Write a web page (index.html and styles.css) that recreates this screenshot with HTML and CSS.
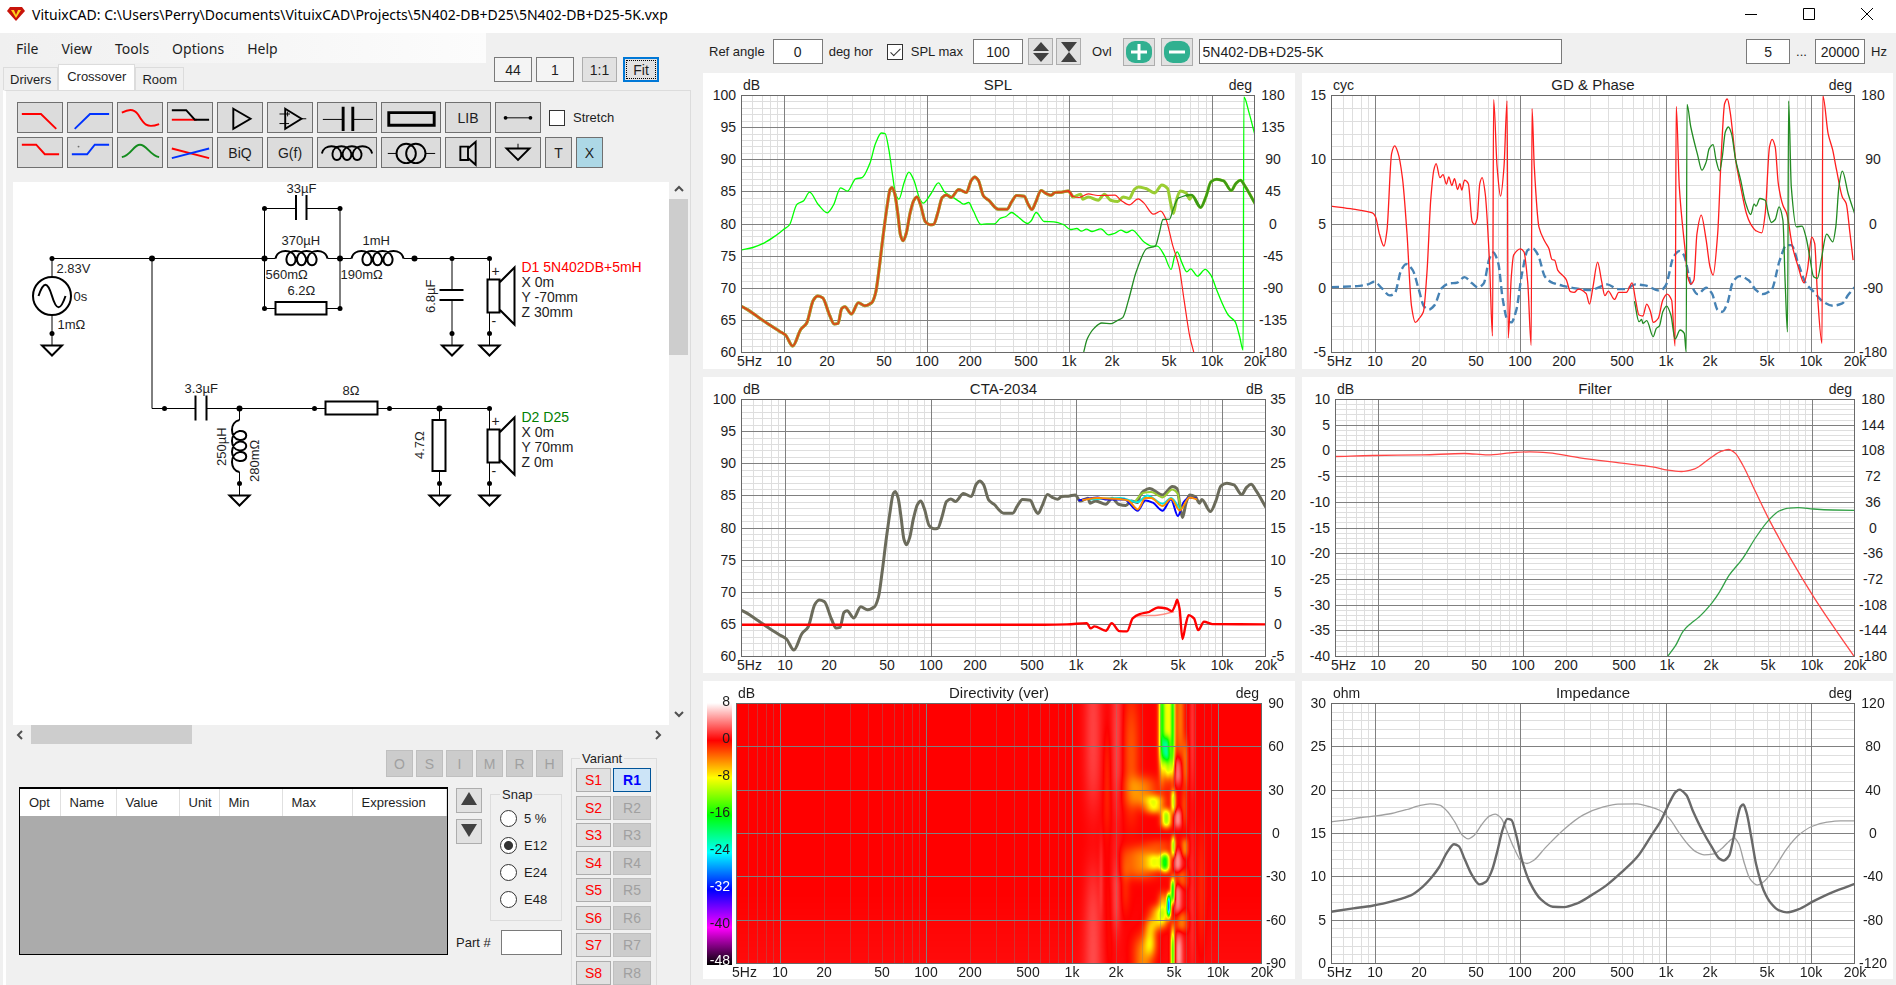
FILE: index.html
```html
<!DOCTYPE html>
<html lang="en">

<head>
  <meta charset="UTF-8">
  <title>VituixCAD</title>
  <link rel="stylesheet" href="styles.css">
</head>

<body>
  <svg class="symbols" aria-hidden="true">
    <symbol id="coil" viewBox="0 0 52 20" overflow="visible">
      <path d="M0 10 C2 0 18 0 20 10 C21 19 10 19 11 10 C12 0 28 0 30.5 10 C31 19 21 19 21.5 10 C23 0 39 0 41 10 C42 19 31 19 32 10 C34 0 50 0 52 10" />
    </symbol>
    <symbol id="ground" viewBox="0 0 24 24" overflow="visible">
      <path class="wire" d="M12 0 V12" />
      <path class="fat" d="M2 12 H22 L12 22 Z" />
      <circle class="dot" cx="12" cy="0" r="2.5" />
    </symbol>
    <symbol id="speaker" viewBox="0 0 30 84" overflow="visible">
      <path class="wire" d="M4 0 V21 M4 54 V75" />
      <path class="fat" d="M2 21 H14 V54 H2 Z M14 24 L29 9 V66 L14 51" />
      <circle class="dot" cx="4" cy="0" r="2.5" />
    </symbol>
  </svg>

  <div class="title-bar">
    <svg class="logo" width="18" height="14" viewBox="0 0 18 14">
      <path d="M3 0 H15 L18 4 L9 14 L0 4 Z" fill="#c8140a" />
      <path d="M4 3 H14 L9 11 Z" fill="#ffd21e" />
      <path d="M7 3 H11 L9 8 Z" fill="#c8140a" />
    </svg>
    <span class="title-text">VituixCAD: C:\Users\Perry\Documents\VituixCAD\Projects\5N402-DB+D25\5N402-DB+D25-5K.vxp</span>
    <div class="window-buttons">
      <button aria-label="Minimize"><svg width="12" height="12"><path d="M0 6.5 H12" /></svg></button>
      <button aria-label="Maximize"><svg width="12" height="12"><path d="M0.5 0.5 H11.5 V11.5 H0.5 Z" /></svg></button>
      <button aria-label="Close"><svg width="12" height="12"><path d="M0 0 L12 12 M12 0 L0 12" /></svg></button>
    </div>
  </div>

  <div class="main">
    <div class="left-pane">
      <div class="head">
        <div class="head-nav">
          <nav class="menu">
            <a href="#">File</a>
            <a href="#">View</a>
            <a href="#">Tools</a>
            <a href="#">Options</a>
            <a href="#">Help</a>
          </nav>
          <div class="tabs">
            <button class="tab">Drivers</button>
            <button class="tab tab-active">Crossover</button>
            <button class="tab">Room</button>
          </div>
        </div>
        <div class="zoom-tools">
          <input class="zoom-box" aria-label="Zoom x" value="44">
          <input class="zoom-box" aria-label="Zoom y" value="1">
          <button class="zoom-one">1:1</button>
          <button class="zoom-fit">Fit</button>
        </div>
      </div>

      <div class="tab-page">
        <div class="toolbar">
          <div class="tool-row">
            <button class="tool" aria-label="Low pass"><svg viewBox="0 0 46 31"><path class="red" d="M4 11.5 H24 L40 27" /></svg></button>
            <button class="tool" aria-label="High pass"><svg viewBox="0 0 46 31"><path class="blue" d="M7 27 L23 11.5 H43" /></svg></button>
            <button class="tool" aria-label="Shelf"><svg viewBox="0 0 46 31"><path class="red" d="M4 10 C10 7 16 5 21 12 C27 22 30 27 43 22" /></svg></button>
            <button class="tool" aria-label="Delay"><svg viewBox="0 0 46 31"><path class="red" d="M4 17.5 H30" /><path d="M4 7.5 H19 L28 17.5 H43" /></svg></button>
            <button class="tool" aria-label="Buffer"><svg viewBox="0 0 46 31"><path d="M16 6 L34 16.5 L16 27 Z" /></svg></button>
            <button class="tool" aria-label="Op amp"><svg viewBox="0 0 46 31"><path d="M18 6 L35 16.5 L18 27 Z" /><path class="thin" d="M35 16.5 H40 M12 11.5 H23 M12 21.5 H22 M20.5 9 V14" /></svg></button>
            <button class="tool tool-wide" aria-label="Capacitor"><svg viewBox="0 0 60 31"><path class="thin" d="M5 17 H26 M36 17 H57" /><path class="bold" d="M26 4 V29 M36 4 V29" /></svg></button>
            <button class="tool tool-wide" aria-label="Resistor"><svg viewBox="0 0 60 31"><path class="bold" d="M7 10 H54 V23 H7 Z" /></svg></button>
            <button class="tool">LIB</button>
            <button class="tool" aria-label="Wire"><svg viewBox="0 0 46 31"><path class="thin" d="M10 15.5 H36" /><circle cx="10" cy="15.5" r="1" /><circle cx="36" cy="15.5" r="1" /></svg></button>
            <label class="stretch"><input type="checkbox" class="check">Stretch</label>
          </div>
          <div class="tool-row">
            <button class="tool" aria-label="Low shelf"><svg viewBox="0 0 46 31"><path class="red" d="M4 7 H19 L28 17 H43" /></svg></button>
            <button class="tool" aria-label="High shelf"><svg viewBox="0 0 46 31"><path class="blue" d="M4 17 H20 L28 7 H43" /><circle class="speck" cx="11" cy="9" r="1" /></svg></button>
            <button class="tool" aria-label="Peak"><svg viewBox="0 0 46 31"><path class="green" d="M4 20 C14 18 16 7 23 7 C30 7 33 18 43 20" /></svg></button>
            <button class="tool" aria-label="Linkwitz"><svg viewBox="0 0 46 31"><path class="red" d="M4 11 L43 21" /><path class="blue" d="M4 21 L43 11" /></svg></button>
            <button class="tool">BiQ</button>
            <button class="tool">G(f)</button>
            <button class="tool tool-wide" aria-label="Inductor"><svg viewBox="0 0 60 31"><use href="#coil" x="4" y="6" width="52" height="20" /></svg></button>
            <button class="tool tool-wide" aria-label="Transformer"><svg viewBox="0 0 60 31"><circle cx="25" cy="16" r="10" /><circle cx="35" cy="16" r="10" /><path class="thin" d="M6 16 H15 M45 16 H55" /></svg></button>
            <button class="tool" aria-label="Driver"><svg viewBox="0 0 46 31"><path d="M15 9 H23 V23 H15 Z M23 11 L31 4 V28 L23 21" /></svg></button>
            <button class="tool" aria-label="Ground"><svg viewBox="0 0 46 31"><path d="M11 11 H35 L23 23 Z" /><path class="thin" d="M23 6 V11" /></svg></button>
            <button class="tool tool-small">T</button>
            <button class="tool tool-small tool-on">X</button>
          </div>
        </div>

        <div class="canvas-box">
          <svg class="schematic" width="655" height="543" viewBox="13 181 655 543">
            <!-- main rail and source -->
            <path class="wire" d="M51.5 276 V257.5 H275 M327 257.5 H351 M403 257.5 H489 M51.5 314 V333" />
            <circle class="fat" cx="51.5" cy="295" r="19" />
            <path class="fat" d="M38 295 C43 280 47 280 51.5 295 C56 310 60 310 65 295" />
            <use href="#ground" x="39.5" y="332.5" width="24" height="24" />
            <circle class="dot" cx="51.5" cy="257.5" r="2.5" />
            <circle class="dot" cx="151.5" cy="257.5" r="3" />
            <circle class="dot" cx="264" cy="257.5" r="3" />
            <circle class="dot" cx="339.5" cy="257.5" r="3" />
            <circle class="dot" cx="414" cy="257.5" r="3" />
            <circle class="dot" cx="451.5" cy="257.5" r="2.5" />
            <!-- parallel trap -->
            <path class="wire" d="M295 207.5 H264 V307.5 H275 M306 207.5 H339.5 V307.5 H326" />
            <path class="fat" d="M295.5 194 V219 M306 194 V219" />
            <use class="fat" href="#coil" x="275" y="247.5" width="52" height="20" />
            <use class="fat" href="#coil" x="351" y="247.5" width="52" height="20" />
            <path class="fat" d="M275 301 H326 V313.5 H275 Z" />
            <circle class="dot" cx="264" cy="207.5" r="2.5" />
            <circle class="dot" cx="339.5" cy="207.5" r="2.5" />
            <circle class="dot" cx="264" cy="307.5" r="2.5" />
            <circle class="dot" cx="339.5" cy="307.5" r="2.5" />
            <!-- shunt capacitor and woofer -->
            <path class="wire" d="M451.5 257.5 V289 M451.5 299 V333" />
            <path class="fat" d="M439 289 H463 M439 299 H463" />
            <use href="#ground" x="439.5" y="332.5" width="24" height="24" />
            <use href="#speaker" x="485" y="257.5" width="30" height="84" />
            <use href="#ground" x="477" y="332.5" width="24" height="24" />
            <!-- tweeter branch -->
            <path class="wire" d="M151.5 257.5 V407.5 H195 M206 407.5 H325 M377 407.5 H489 M239 407.5 V419 M239 471 V483 M439 407.5 V419 M439 470 V483" />
            <path class="fat" d="M195 394.5 V419.5 M206 394.5 V419.5 M325 400.5 H377 V413.5 H325 Z M432 419 H445 V470 H432 Z" />
            <g transform="translate(229 471) rotate(-90)"><use class="fat" href="#coil" width="52" height="20" /></g>
            <use href="#ground" x="227" y="482.5" width="24" height="24" />
            <use href="#ground" x="427" y="482.5" width="24" height="24" />
            <use href="#speaker" x="485" y="407.5" width="30" height="84" />
            <use href="#ground" x="477" y="482.5" width="24" height="24" />
            <circle class="dot" cx="164" cy="407.5" r="2.5" />
            <circle class="dot" cx="239" cy="407.5" r="3" />
            <circle class="dot" cx="314" cy="407.5" r="2.5" />
            <circle class="dot" cx="389" cy="407.5" r="2.5" />
            <circle class="dot" cx="439" cy="407.5" r="3" />
            <!-- part values -->
            <g class="value">
              <text x="56" y="272">2.83V</text>
              <text x="73" y="300">0s</text>
              <text x="57" y="328">1mΩ</text>
              <text x="286" y="192">33µF</text>
              <text x="281" y="244">370µH</text>
              <text x="362" y="244">1mH</text>
              <text x="265" y="278">560mΩ</text>
              <text x="340" y="278">190mΩ</text>
              <text x="287" y="294">6.2Ω</text>
              <text x="184" y="392">3.3µF</text>
              <text x="342" y="394">8Ω</text>
              <text transform="translate(434 312) rotate(-90)">6.8µF</text>
              <text transform="translate(225 465) rotate(-90)">250µH</text>
              <text transform="translate(258 481) rotate(-90)">280mΩ</text>
              <text transform="translate(423 458) rotate(-90)">4.7Ω</text>
            </g>
            <g class="driver">
              <text x="491" y="275">+</text>
              <text x="491" y="325">-</text>
              <text class="d1" x="521" y="271">D1 5N402DB+5mH</text>
              <text x="521" y="286">X 0m</text>
              <text x="521" y="301">Y -70mm</text>
              <text x="521" y="316">Z 30mm</text>
              <text x="491" y="425">+</text>
              <text x="491" y="475">-</text>
              <text class="d2" x="521" y="421">D2 D25</text>
              <text x="521" y="436">X 0m</text>
              <text x="521" y="451">Y 70mm</text>
              <text x="521" y="466">Z 0m</text>
            </g>
          </svg>
          <div class="scroll-v">
            <svg width="10" height="8"><path d="M1 6 L5 2 L9 6" /></svg>
            <div class="thumb-v"></div>
            <svg width="10" height="8"><path d="M1 2 L5 6 L9 2" /></svg>
          </div>
          <div class="scroll-h">
            <svg width="8" height="10"><path d="M6 1 L2 5 L6 9" /></svg>
            <div class="thumb-h"></div>
            <svg width="8" height="10"><path d="M2 1 L6 5 L2 9" /></svg>
          </div>
        </div>

        <div class="editor">
          <div class="params">
            <div class="modes">
              <button class="mode" disabled>O</button>
              <button class="mode" disabled>S</button>
              <button class="mode" disabled>I</button>
              <button class="mode" disabled>M</button>
              <button class="mode" disabled>R</button>
              <button class="mode" disabled>H</button>
            </div>
            <div class="params-row">
              <div class="grid-box">
                <table class="param-grid">
                  <thead>
                    <tr>
                      <th class="c-opt">Opt</th>
                      <th class="c-name">Name</th>
                      <th class="c-value">Value</th>
                      <th class="c-opt">Unit</th>
                      <th class="c-value">Min</th>
                      <th class="c-max">Max</th>
                      <th>Expression</th>
                    </tr>
                  </thead>
                </table>
              </div>
              <div class="nudge">
                <button aria-label="Up"><svg width="16" height="14"><path d="M8 0 L16 13 H0 Z" /></svg></button>
                <button aria-label="Down"><svg width="16" height="14"><path d="M0 1 H16 L8 14 Z" /></svg></button>
              </div>
              <fieldset class="snap">
                <legend>Snap</legend>
                <label><input type="radio" name="snap">5 %</label>
                <label><input type="radio" name="snap" checked>E12</label>
                <label><input type="radio" name="snap">E24</label>
                <label><input type="radio" name="snap">E48</label>
              </fieldset>
              <label class="part">Part # <input class="part-box"></label>
            </div>
          </div>
          <fieldset class="variant">
            <legend>Variant</legend>
            <div class="variant-list">
              <button class="save">S1</button><button class="recall recall-on">R1</button>
              <button class="save">S2</button><button class="recall" disabled>R2</button>
              <button class="save">S3</button><button class="recall" disabled>R3</button>
              <button class="save">S4</button><button class="recall" disabled>R4</button>
              <button class="save">S5</button><button class="recall" disabled>R5</button>
              <button class="save">S6</button><button class="recall" disabled>R6</button>
              <button class="save">S7</button><button class="recall" disabled>R7</button>
              <button class="save">S8</button><button class="recall" disabled>R8</button>
            </div>
          </fieldset>
        </div>
      </div>
    </div>

    <div class="right-pane">
      <div class="chart-tools">
        <label class="ref">Ref angle <input class="num" value="0"></label>
        <span class="unit">deg hor</span>
        <label class="spl-max"><input type="checkbox" class="check" checked>SPL max</label>
        <input class="num" aria-label="SPL max" value="100">
        <button class="spin" aria-label="Expand"><svg width="16" height="20"><path d="M8 0 L16 9 H0 Z M0 11 H16 L8 20 Z" /></svg></button>
        <button class="spin spin-last" aria-label="Compress"><svg width="16" height="20"><path d="M0 0 H16 L8 10 Z M8 10 L16 20 H0 Z" /></svg></button>
        <span class="ovl-text">Ovl</span>
        <button class="ovl" aria-label="Add overlay"><svg width="26" height="22"><rect width="26" height="22" rx="9" /><path d="M5 11 H21 M13 3 V19" /></svg></button>
        <button class="ovl" aria-label="Remove overlay"><svg width="26" height="22"><rect width="26" height="22" rx="9" /><path d="M5 11 H21" /></svg></button>
        <input class="name-box" aria-label="Overlay name" value="5N402-DB+D25-5K">
        <span class="range">
          <input class="num num-min" aria-label="Min frequency" value="5">
          <span class="dots">...</span>
          <input class="num" aria-label="Max frequency" value="20000">
          <span>Hz</span>
        </span>
      </div>
      <div class="charts">
        <div class="chart" id="spl"></div>
        <div class="chart" id="gd"></div>
        <div class="chart" id="cta"></div>
        <div class="chart" id="filter"></div>
        <div class="chart" id="directivity"></div>
        <div class="chart" id="impedance"></div>
      </div>
    </div>
  </div>

  <script src="charts.js"></script>
</body>

</html>
```

FILE: styles.css
```css
* {
  box-sizing: border-box;
}

body {
  margin: 0;
  height: 100vh;
  display: flex;
  flex-direction: column;
  overflow: hidden;
  background: #f0f0f0;
  color: #1e1e1e;
  font-family: "Liberation Sans", Arial, sans-serif;
  font-size: 13px;
}

button,
input {
  font-family: inherit;
  font-size: 14px;
  color: inherit;
  margin: 0;
  padding: 0;
}

button {
  border: 1px solid #adadad;
  background: #e1e1e1;
}

input {
  border: 1px solid #7a7a7a;
  background: white;
  text-align: center;
}

fieldset {
  border: 1px solid #dcdcdc;
  margin: 0;
  min-width: 0;
}

.symbols {
  position: absolute;
  width: 0;
  height: 0;
}

/* title bar */
.title-bar {
  display: flex;
  align-items: center;
  height: 33px;
  padding: 0 23px 5px 7px;
  background: white;
  color: black;
}

.title-text {
  margin-left: 7px;
  font-family: "Noto Sans", "Open Sans", sans-serif;
  font-size: 14px;
}

.window-buttons {
  margin-left: auto;
  display: flex;
  gap: 46px;
}

.window-buttons button {
  border: 0;
  background: none;
  display: flex;
}

.window-buttons path {
  fill: none;
  stroke: black;
}

.main {
  flex: 1;
  display: grid;
  grid-template-columns: 703px 1fr;
  min-height: 0;
}

/* left pane */
.left-pane {
  display: flex;
  flex-direction: column;
  padding: 0 12px 0 3px;
  min-height: 0;
}

.head {
  display: flex;
}

.head-nav {
  width: 483px;
}

.menu {
  display: flex;
  align-items: center;
  gap: 23px;
  height: 30px;
  padding-left: 13px;
  background: linear-gradient(to right, #f0f0f0, #fcfcfc);
  font-family: "Noto Sans", "Open Sans", sans-serif;
  font-size: 14px;
}

.menu a {
  color: #1e1e1e;
  text-decoration: none;
}

.tabs {
  display: flex;
  align-items: flex-end;
  height: 27px;
}

.tab {
  height: 23px;
  padding: 0 6px;
  border-color: #dcdcdc;
  border-bottom: 0;
  background: #f0f0f0;
  font-size: 13px;
}

.tab-active {
  height: 26px;
  padding: 0 8px 3px;
  background: white;
}

.zoom-tools {
  display: flex;
  gap: 4px;
  padding: 24px 0 0 8px;
}

.zoom-tools button,
.zoom-tools input {
  height: 25px;
}

.zoom-box {
  width: 38px;
  background: #f4f4f4;
}

.zoom-tools .zoom-one {
  width: 35px;
  margin-left: 4px;
}

.zoom-tools .zoom-fit {
  width: 36px;
  margin-left: 2px;
  border: 2px solid #0078d7;
  outline: 1px dotted black;
  outline-offset: -4px;
}

.tab-page {
  flex: 1;
  display: flex;
  flex-direction: column;
  min-height: 0;
  border: 1px solid #dcdcdc;
  border-bottom: 0;
  border-left: 3px solid white;
}

.toolbar {
  display: flex;
  flex-direction: column;
  gap: 4px;
  padding: 11px 0 14px 11px;
}

.tool-row {
  display: flex;
  gap: 4px;
}

.tool {
  width: 46px;
  height: 31px;
  border-color: #707070;
  background: #dcdcdc;
}

.tool-wide {
  width: 60px;
}

.tool-small {
  width: 27px;
}

.tool-on {
  background: #add8e6;
}

.tool svg {
  display: block;
  width: 100%;
  fill: none;
  stroke: black;
  stroke-width: 2;
}

.tool .thin {
  stroke-width: 1;
}

.tool .bold {
  stroke-width: 3;
}

.tool .red {
  stroke: red;
}

.tool .blue {
  stroke: #0032ff;
}

.tool .green {
  stroke: #148c1e;
}

.tool .speck {
  stroke: none;
  fill: #707070;
}

.stretch,
.spl-max {
  display: flex;
  align-items: center;
  gap: 8px;
}

.stretch {
  margin-left: 4px;
}

.check {
  appearance: none;
  position: relative;
  width: 16px;
  height: 16px;
  border: 1px solid #333;
}

.check:checked::after {
  content: "";
  position: absolute;
  left: 5px;
  top: 1px;
  width: 4px;
  height: 9px;
  border: solid #333;
  border-width: 0 1px 1px 0;
  transform: rotate(45deg);
}

/* schematic */
.canvas-box {
  display: grid;
  grid-template-columns: 1fr 19px;
  grid-template-rows: 543px 19px;
  padding: 0 2px 0 7px;
}

.schematic {
  display: block;
  width: 100%;
  overflow: visible;
  background: white;
}

.wire,
.fat {
  fill: none;
  stroke: black;
  stroke-width: 1;
}

.fat {
  stroke-width: 2;
}

.dot {
  fill: black;
}

.value {
  font-size: 13px;
  fill: #1e1e1e;
}

.driver {
  font-size: 14px;
  fill: #1e1e1e;
}

.driver .d1 {
  fill: red;
}

.driver .d2 {
  fill: green;
}

.scroll-v,
.scroll-h {
  display: flex;
  align-items: center;
}

.scroll-v {
  flex-direction: column;
  padding: 3px 0 7px;
}

.scroll-h {
  padding: 0 7px 0 3px;
}

.scroll-v svg:last-child {
  margin-top: auto;
}

.scroll-h svg:last-child {
  margin-left: auto;
}

.scroll-v path,
.scroll-h path {
  fill: none;
  stroke: #505050;
  stroke-width: 2;
}

.thumb-v {
  width: 19px;
  height: 156px;
  margin-top: 6px;
  background: #cdcdcd;
}

.thumb-h {
  width: 161px;
  height: 19px;
  margin-left: 7px;
  background: #cdcdcd;
}

/* parameter editor */
.editor {
  display: flex;
  gap: 8px;
  padding: 6px 0 0 13px;
}

.params {
  width: 544px;
}

.modes {
  display: flex;
  justify-content: flex-end;
  gap: 3px;
  margin-bottom: 10px;
}

.mode {
  width: 27px;
  height: 27px;
}

button:disabled {
  border-color: #bfbfbf;
  background: #cccccc;
  color: #a0a0a0;
}

.params-row {
  display: grid;
  grid-template-columns: 429px 26px 72px;
  grid-template-rows: 134px 26px;
  column-gap: 8px;
  row-gap: 8px;
}

.grid-box {
  grid-row: 1 / 3;
  border: 1px solid black;
  border-top-width: 2px;
  background: #ababab;
}

.param-grid {
  width: 100%;
  height: 27px;
  table-layout: fixed;
  border-collapse: collapse;
  background: white;
}

.param-grid th {
  padding: 0 0 0 9px;
  border-right: 1px solid #e0e0e0;
  font-weight: normal;
  text-align: left;
}

.c-opt {
  width: 40px;
}

.c-name {
  width: 56px;
}

.c-value {
  width: 63px;
}

.c-max {
  width: 70px;
}

.nudge {
  display: flex;
  flex-direction: column;
  gap: 6px;
  padding-top: 1px;
}

.nudge button {
  height: 25px;
}

.nudge path,
.spin path {
  fill: #404040;
}

.snap {
  display: flex;
  flex-direction: column;
  gap: 9px;
  padding: 7px 0 0 9px;
}

.snap legend {
  padding: 0 2px;
}

.snap label {
  display: flex;
  align-items: center;
  gap: 7px;
  height: 18px;
}

.snap input {
  appearance: none;
  width: 17px;
  height: 17px;
  border: 1px solid #333;
  border-radius: 50%;
}

.snap input:checked {
  background: radial-gradient(#333 4px, white 5px);
}

.part {
  grid-column: 2 / 4;
  display: flex;
  align-items: center;
  justify-content: space-between;
}

.part-box {
  width: 61px;
  height: 25px;
}

.variant {
  width: 86px;
  height: 260px;
  margin-top: 1px;
  padding: 2px 5px 0 4px;
}

.variant legend {
  margin-left: 4px;
  padding: 0 2px;
}

.variant-list {
  display: grid;
  grid-template-columns: 35px 38px;
  justify-content: space-between;
  align-content: space-between;
  height: 217px;
}

.variant-list button {
  height: 24px;
}

.save {
  color: red;
}

.variant-list .recall-on {
  border-color: #005499;
  background: #cce4f7;
  color: blue;
  font-weight: bold;
}

/* right pane */
.right-pane {
  display: flex;
  flex-direction: column;
  padding-right: 3px;
  min-width: 0;
}

.chart-tools {
  display: flex;
  align-items: center;
  height: 37px;
  margin-bottom: 3px;
  padding: 0 6px;
}

.num {
  width: 50px;
  height: 25px;
}

.ref {
  display: flex;
  align-items: center;
  gap: 8px;
}

.unit {
  margin: 0 14px 0 6px;
}

.spl-max {
  margin-right: 10px;
}

.spin {
  display: flex;
  align-items: center;
  justify-content: center;
  width: 25px;
  height: 27px;
  margin-left: 5px;
}

.spin-last {
  margin-left: 3px;
}

.ovl-text {
  margin: 0 11px 0 11px;
}

.ovl {
  display: flex;
  align-items: center;
  justify-content: center;
  width: 32px;
  height: 28px;
  margin-right: 6px;
}

.ovl rect {
  fill: #30b090;
}

.ovl path {
  stroke: white;
  stroke-width: 3;
}

.name-box {
  flex: 1;
  max-width: 363px;
  height: 25px;
  padding: 0 3px;
  text-align: left;
}

.range {
  display: flex;
  align-items: center;
  margin-left: auto;
  gap: 6px;
}

.num-min {
  width: 44px;
}

.dots {
  width: 13px;
}

.charts {
  flex: 1;
  display: grid;
  grid-template-columns: 1fr 1fr;
  grid-template-rows: 296px 296px 298px;
  gap: 8px 7px;
}

.chart {
  display: grid;
  min-width: 0;
  background: white;
}

.chart canvas,
.chart svg {
  grid-area: 1 / 1;
}

.chart svg {
  display: block;
  width: 100%;
  height: 100%;
  overflow: visible;
}

.chart text {
  font-size: 14px;
  fill: #1e1e1e;
}

.chart .chart-title {
  font-size: 15px;
}

.chart .on-dark {
  fill: white;
}
```

FILE: charts.js
```js
const NS = 'http://www.w3.org/2000/svg';
const GREY = '#808080';
const MINOR = '#dedede';

// response points are digitised x,y pairs inside each box
const splBox = [109, 284, 1450, 1056];
const splLow = '109,918 125,928 150,948 180,972 210,994 225,1005 244,1038 265,988 280,970 298,900 309,888 322,893 340,945 352,972 362,970 372,925 380,920 397,942 415,908 432,917 450,908 460,880 470,800 480,705 490,620 498,568 503,562 510,580 518,640 525,705 532,722 540,700 550,640 560,600 568,590 577,612 590,665 602,674 612,672 622,640 634,592 645,584 657,592 677,568 697,577 710,540 719,530 728,540 742,588 755,600 780,627 803,627 815,605 828,586 848,588 858,612 868,628 878,605 892,571 905,580 918,585 928,577 945,576 963,572 975,590';
const splHigh = '1308,622 1322,590 1335,545 1350,537 1368,542 1388,571 1400,550 1412,540 1425,560 1450,610';
const splSum = splLow + ' 995,582 1001,597 1015,590 1041,600 1057,582 1073,600 1092,604 1106,590 1122,595 1135,568 1145,560 1165,565 1188,578 1207,554 1222,565 1230,610 1237,640 1245,600 1255,572 1270,578 1280,597 1286,586 ' + splHigh;
const ctaBox = [109, 70, 1480, 843];
const gdBox = [92, 284, 1458, 1056];
const filterBox = [102, 70, 1458, 843];
const impBox = [92, 67, 1458, 848];

const charts = [
  {
    id: 'spl', title: 'SPL', left: 'dB', right: 'deg', pad: [38, 22, 40, 17], rightMid: 18,
    y: [100, 60, 5], minor: 1, yRight: [180, -180, 45],
    series: [
      { box: splBox, color: '#00ff00', width: 1.3, points: '109,750 140,742 170,728 200,706 220,688 235,675 255,612 272,602 288,576 310,612 334,638 350,615 369,563 387,573 408,536 425,532 445,490 460,430 475,398 485,400 495,450 505,530 512,580 521,597 535,545 547,516 560,540 575,595 584,609 605,580 624,548 640,575 660,590 680,605 690,612 703,607 715,632 735,673 750,671 770,671 785,655 800,649 815,637 830,648 857,670 866,662 879,637 900,664 925,665 950,673 968,688 985,685 997,693 1010,687 1025,694 1048,686 1068,704 1085,699 1100,690 1115,697 1130,690 1145,705 1160,725 1180,738 1195,738 1213,765 1231,808 1240,770 1247,755 1260,790 1272,815 1282,806 1300,828 1320,808 1335,825 1350,870 1380,945 1398,965 1410,1010 1419,1050 1421,290 1435,340 1450,405' },
      { box: splBox, color: '#9acd32', width: 3, points: splSum },
      { box: splBox, color: '#b0903c', width: 3, points: splLow },
      { box: splBox, color: '#dc4614', width: 1.6, points: splLow },
      { box: splBox, color: '#ff1e1e', width: 1.2, points: '963,572 975,588 990,592 1015,581 1040,586 1085,585 1100,600 1122,614 1145,596 1160,608 1185,642 1204,633 1217,655 1235,735 1252,800 1265,900 1280,1010 1290,1056' },
      { box: splBox, color: '#228b22', width: 1.3, points: '1003,1056 1012,1018 1030,985 1050,969 1075,971 1090,962 1105,952 1120,900 1140,815 1168,745 1190,738 1200,700 1210,658 1227,657 1237,625 1250,594 1284,584 1308,622' },
      { box: splBox, color: '#3c9a14', width: 2.4, points: '1270,586 1284,584 ' + splHigh }
    ]
  },
  {
    id: 'gd', title: 'GD & Phase', left: 'cyc', right: 'deg', pad: [29, 22, 39, 17], rightMid: 18,
    y: [15, -5, 5], minor: 1, yRight: [180, -180, 90],
    series: [
      { box: gdBox, color: '#4682b4', width: 2.4, dash: '8 4', points: '92,861 160,858 190,852 205,845 225,865 245,886 258,880 275,810 288,792 305,810 320,865 335,920 348,928 362,915 380,865 400,850 420,848 440,831 460,850 475,862 490,850 505,775 515,757 528,790 540,900 552,960 562,967 575,930 590,820 605,750 618,745 632,765 650,830 670,848 700,858 730,865 770,870 790,862 812,853 840,867 860,867 885,853 910,856 950,872 965,855 985,770 1000,753 1012,765 1030,850 1048,882 1070,863 1085,880 1100,930 1112,935 1125,910 1140,845 1158,828 1180,840 1200,870 1217,882 1240,870 1262,780 1280,735 1292,735 1310,790 1330,850 1350,875 1375,905 1400,917 1425,910 1440,885 1457,862' },
      { box: gdBox, color: '#ff1e1e', width: 1.3, points: '92,618 150,627 200,638 208,650 218,700 230,738 238,690 250,460 258,437 266,455 278,530 290,700 302,920 312,967 322,955 333,935 342,820 352,600 360,510 366,490 376,532 384,523 393,552 399,530 407,556 414,535 422,568 428,550 433,570 440,540 450,550 460,665 466,673 473,655 480,550 486,532 494,580 505,780 513,1008 516,298 525,500 534,588 543,500 551,302 554,1014 562,830 568,765 586,746 595,755 605,850 614,1036 616,325 622,500 634,680 650,725 660,745 668,778 675,780 683,810 705,838 716,875 726,877 737,867 757,880 766,912 775,860 787,786 797,840 806,887 815,873 831,898 842,877 862,877 877,848 886,900 895,945 905,948 915,912 925,935 932,967 945,955 957,900 968,882 980,900 989,1038 992,318 1000,560 1015,750 1022,830 1030,852 1038,840 1046,700 1057,645 1070,720 1080,800 1088,825 1100,700 1110,450 1118,310 1125,296 1132,330 1147,480 1160,560 1175,640 1186,672 1200,692 1215,698 1224,640 1235,440 1242,417 1250,440 1258,550 1270,615 1280,640 1295,740 1310,800 1325,848 1334,810 1345,711 1353,730 1360,880 1372,1030 1374,286 1388,400 1400,450 1410,510 1425,590 1435,610 1445,700 1453,780' },
      { box: gdBox, color: '#228b22', width: 1.3, points: '883,903 895,965 902,958 905,970 915,962 932,1010 940,985 948,978 957,935 967,918 978,945 989,1017 1002,990 1013,1000 1018,1056 1020,312 1030,380 1048,465 1059,510 1070,485 1078,445 1088,433 1096,480 1105,512 1112,470 1120,395 1128,380 1136,400 1147,480 1160,540 1172,605 1186,643 1195,612 1200,618 1210,595 1224,600 1232,640 1240,667 1250,658 1260,620 1270,660 1276,850 1282,996 1285,302 1292,560 1305,680 1320,678 1330,710 1340,770 1350,830 1360,835 1370,780 1384,702 1400,725 1408,680 1416,560 1425,513 1440,580 1457,640' }
    ]
  },
  {
    id: 'cta', title: 'CTA-2034', left: 'dB', right: 'dB', pad: [38, 22, 29, 17], rightMid: 12,
    y: [100, 60, 5], minor: 1, yRight: [35, -5, 5],
    series: [
      { box: ctaBox, color: '#ff8c82', width: 1.5, points: '1132,728 1150,722 1190,721 1240,710' },
      { box: splBox, color: '#6b6b5b', width: 3, points: splSum.replace('1135,568 1145,560 1165,565 1188,578 1207,554 1222,565 1230,610', '1128,575 1138,560 1152,553 1186,572 1211,547 1223,553 1231,612') },
      { box: ctaBox, color: '#00e6e6', width: 2, points: '1020,372 1100,368 1145,380 1170,360 1210,385 1232,368 1255,400' },
      { box: ctaBox, color: '#0000ff', width: 2, points: '990,375 1040,366 1060,372 1110,372 1145,406 1165,375 1185,382 1210,406 1232,372 1250,422 1265,380 1280,366 1300,370' },
      { box: ctaBox, color: '#ff8c00', width: 2, points: '1000,374 1040,368 1080,370 1120,375 1145,402 1165,368 1180,368 1210,392 1232,370 1255,405 1280,366 1300,372' },
      { box: ctaBox, color: '#9acd32', width: 2, points: '1138,378 1160,352 1180,350 1210,366 1235,342 1248,352 1258,400' },
      { box: ctaBox, color: '#ff0000', width: 2.4, points: '109,749 900,749 960,748 1012,744 1022,760 1032,754 1062,767 1077,744 1097,768 1117,769 1132,730 1150,717 1175,710 1198,697 1220,700 1234,708 1243,690 1248,674 1254,700 1262,792 1270,750 1278,720 1292,730 1303,765 1318,740 1340,747 1480,748' }
    ]
  },
  {
    id: 'filter', title: 'Filter', left: 'dB', right: 'deg', pad: [33, 22, 39, 17], rightMid: 18,
    y: [10, -40, 5], minor: 1, yRight: [180, -180, 36],
    series: [
      { box: filterBox, color: '#ff4646', width: 1.3, points: '102,243 200,240 330,238 440,234 500,238 560,232 610,229 660,232 740,247 850,263 930,274 970,284 1005,288 1040,280 1080,248 1110,227 1128,222 1145,232 1165,268 1195,340 1235,435 1290,550 1350,665 1400,752 1455,843' },
      { box: filterBox, color: '#32a046', width: 1.3, points: '970,843 990,812 1010,768 1030,745 1050,727 1085,683 1105,650 1130,600 1165,550 1200,485 1235,432 1260,407 1285,398 1310,397 1350,401 1400,404 1458,405' }
    ]
  },
  {
    id: 'directivity', title: 'Directivity (ver)', left: 'dB', right: 'deg', pad: [33, 22, 33, 16], rightMid: 14,
    heat: true, yRight: [90, -90, 30], series: []
  },
  {
    id: 'impedance', title: 'Impedance', left: 'ohm', right: 'deg', pad: [29, 22, 39, 16], rightMid: 18,
    y: [30, 0, 5], minor: 1, yRight: [120, -120, 40],
    series: [
      { box: impBox, color: '#a0a0a0', width: 1.3, points: '92,424 130,419 170,411 210,406 250,399 290,387 320,376 350,370 375,374 395,392 415,425 435,465 450,475 465,465 485,432 505,407 520,401 535,412 550,450 570,505 590,544 603,549 620,540 650,503 700,446 750,403 800,380 840,371 890,370 920,378 950,390 975,415 1000,458 1025,495 1045,515 1065,523 1090,520 1110,505 1130,482 1143,472 1155,490 1170,550 1185,597 1203,614 1220,604 1245,568 1280,505 1310,465 1345,438 1385,425 1420,421 1458,421' },
      { box: impBox, color: '#696969', width: 2.4, points: '92,694 150,684 200,676 260,660 300,645 330,620 355,590 375,558 395,515 413,491 425,497 440,535 460,585 480,612 495,605 510,575 525,515 540,445 552,415 562,418 575,465 590,540 610,605 640,658 670,679 700,680 735,668 770,645 810,615 850,575 890,530 930,460 950,425 975,365 990,335 1000,327 1018,343 1035,390 1060,450 1085,500 1105,535 1115,540 1130,525 1140,480 1150,420 1160,378 1167,372 1175,395 1187,465 1200,550 1220,630 1240,670 1260,690 1280,696 1310,687 1350,662 1400,635 1458,610' }
    ]
  }
];

// off-axis level: x, y, half width, half height, dB on a 525 x 260 field
const lobes = [
  [430.5, 16, 6, 54, -8], [424.5, 18, 3, 50, -12], [435.5, 18, 2.2, 50, -11], [429, 45, 4, 12, -13], [431, 62, 4.5, 12, -6],
  [443, 12, 4, 45, -3.5], [448, 60, 3, 24, -3], [440.5, 67, 4, 14, 4], [394, 55, 8, 60, -2.5],
  [405, 88, 14, 15, -4], [417, 101, 9, 9, -7.5], [429, 115, 5, 9, -11], [436, 98, 2.5, 11, -9],
  [440.5, 115, 4, 9, 4.5], [447, 105, 3, 18, -2], [356, 30, 9, 80, 2], [380, 40, 6, 78, 2],
  [370, 80, 4, 50, -1.2], [455, 30, 2.5, 60, 1.5], [422, 145, 14, 9, -2],
  [436, 143, 2.2, 10, -10], [447.5, 144, 3.5, 9, -4], [403, 159, 17, 16, -4], [418, 159, 9, 8, -6.5],
  [428, 159, 4.5, 9, -14], [440.5, 158, 4, 12, 4.5], [442, 175, 7, 9, -4], [435.5, 188, 2.2, 12, -16],
  [431.5, 202, 2, 11, -26], [426, 205, 5, 15, -6], [421, 214, 8, 12, -6], [413, 234, 6, 18, -6],
  [406, 256, 10, 24, -4.5], [440.5, 193, 4, 20, 4], [444, 218, 6, 10, -4], [435.5, 250, 2.2, 24, -14],
  [441.5, 250, 4, 20, 4.5], [356, 235, 9, 75, 2], [379, 185, 5, 45, 2], [364, 170, 2, 40, 1],
  [455, 190, 2.5, 70, 1.2], [464, 190, 4, 60, -1], [388, 180, 5, 30, -1.2], [372, 225, 4, 50, -0.6]
];

const scale = [
  [8, 255, 255, 255], [0, 255, 0, 0], [-8, 255, 255, 0], [-16, 0, 255, 0],
  [-24, 0, 255, 255], [-32, 0, 0, 255], [-40, 255, 0, 255], [-48, 0, 0, 0]
];

function add(parent, name, attrs, text) {
  const el = document.createElementNS(NS, name);
  for (const key in attrs) el.setAttribute(key, attrs[key]);
  if (text !== undefined) el.textContent = text;
  parent.appendChild(el);
  return el;
}

function levelColor(v) {
  v = Math.max(-48, Math.min(8, v));
  for (let i = 1; i < scale.length; i++) {
    if (v >= scale[i][0]) {
      const a = scale[i - 1], b = scale[i];
      const t = (a[0] - v) / (a[0] - b[0]);
      return [1, 2, 3].map(k => a[k] + (b[k] - a[k]) * t);
    }
  }
}

// monotone cubic through the points, so peaks don't overshoot
function curve(pts) {
  const n = pts.length;
  const d = [], m = [];
  for (let i = 0; i < n - 1; i++) d[i] = (pts[i + 1][1] - pts[i][1]) / (pts[i + 1][0] - pts[i][0]);
  m[0] = d[0];
  m[n - 1] = d[n - 2];
  for (let i = 1; i < n - 1; i++) m[i] = d[i - 1] * d[i] <= 0 ? 0 : 2 * d[i - 1] * d[i] / (d[i - 1] + d[i]);
  let path = 'M' + pts[0].map(v => v.toFixed(1));
  for (let i = 0; i < n - 1; i++) {
    const [x0, y0] = pts[i], [x1, y1] = pts[i + 1];
    const h = (x1 - x0) / 3;
    path += 'C' + [x0 + h, y0 + m[i] * h, x1 - h, y1 - m[i + 1] * h, x1, y1].map(v => v.toFixed(1));
  }
  return path;
}

function drawHeat(panel, x, y, w, h) {
  const canvas = document.createElement('canvas');
  canvas.width = panel.clientWidth;
  canvas.height = panel.clientHeight;
  panel.appendChild(canvas);
  const ctx = canvas.getContext('2d');
  const img = ctx.createImageData(w, h);
  for (let j = 0; j < h; j++) {
    for (let i = 0; i < w; i++) {
      const px = i * 525 / w, py = j * 260 / h;
      let v = py > 190 ? (py - 190) / 200 : 0;
      for (const [cx, cy, rx, ry, db] of lobes) {
        const dx = (px - cx) / rx, dy = Math.abs((py - cy) / ry);
        if (Math.abs(dx) < 3 && dy < 2) v += db * Math.exp(-dx * dx - dy * dy * dy);
      }
      const c = levelColor(v);
      img.data.set([c[0], c[1], c[2], 255], (j * w + i) * 4);
    }
  }
  ctx.putImageData(img, x, y);
}

function drawChart(c) {
  const panel = document.getElementById(c.id);
  const W = panel.clientWidth, H = panel.clientHeight;
  const [l, t, r, b] = c.pad;
  const w = W - l - r, h = H - t - b;
  if (c.heat) drawHeat(panel, l, t, w, h);
  const svg = add(panel, 'svg', { width: W, height: H });
  const fx = f => Math.round(l + w * Math.log(f / 5) / Math.log(4000));
  const line = (x1, y1, x2, y2, color, extra) => add(svg, 'path', Object.assign({ d: `M${x1} ${y1}L${x2} ${y2}`, stroke: color }, extra));

  const fine = c.heat ? { 'stroke-opacity': 0.35 } : {};
  for (const dec of [1, 10, 100, 1000, 10000]) {
    for (let k = 2; k < 10; k++) {
      const f = dec * k;
      if (f > 5 && f < 20000) line(fx(f) + 0.5, t, fx(f) + 0.5, t + h, c.heat ? GREY : MINOR, fine);
    }
  }
  if (c.y) {
    const [top, bottom, step] = c.y;
    const yy = v => Math.round(t + h * (top - v) / (top - bottom)) + 0.5;
    for (let v = bottom; v <= top; v += c.minor) {
      if (v % step) line(l, yy(v), l + w, yy(v), MINOR);
    }
    for (let v = bottom; v <= top; v += step) {
      line(l, yy(v), l + w, yy(v), GREY);
      add(svg, 'text', { x: l - 5, y: yy(v) + 4, 'text-anchor': 'end' }, v);
    }
  }
  for (const f of [10, 100, 1000, 10000]) line(fx(f) + 0.5, t, fx(f) + 0.5, t + h, GREY);

  const [rTop, rBottom, rStep] = c.yRight;
  for (let v = rBottom; v <= rTop; v += rStep) {
    const y = Math.round(t + h * (rTop - v) / (rTop - rBottom)) + 0.5;
    if (c.heat) line(l, y, l + w, y, GREY);
    add(svg, 'text', { x: l + w + c.rightMid, y: y + 4, 'text-anchor': 'middle' }, v);
  }

  if (c.heat) {
    const defs = add(svg, 'defs', {});
    const grad = add(defs, 'linearGradient', { id: 'levels', x2: 0, y2: 1 });
    scale.forEach((s, i) => add(grad, 'stop', { offset: i / 7, 'stop-color': `rgb(${s[1]},${s[2]},${s[3]})` }));
    add(svg, 'rect', { x: 4, y: t, width: 25, height: h + 2, fill: 'url(#levels)' });
    scale.forEach((s, i) => add(svg, 'text', {
      x: 27, y: t + 3 + i * 37, 'text-anchor': 'end', class: s[0] === -32 || s[0] === -48 ? 'on-dark' : ''
    }, s[0]));
  }

  const clip = c.id + '-clip';
  const cp = add(svg, 'clipPath', { id: clip });
  add(cp, 'rect', { x: l, y: t, width: w, height: h });
  const g = add(svg, 'g', { 'clip-path': `url(#${clip})`, fill: 'none', 'stroke-linejoin': 'round' });
  for (const s of c.series) {
    const [x0, y0, x1, y1] = s.box;
    const pts = s.points.split(' ').map(p => {
      const [x, y] = p.split(',').map(Number);
      return [l + w * (x - x0) / (x1 - x0), t + h * (y - y0) / (y1 - y0)];
    });
    add(g, 'path', { d: curve(pts), stroke: s.color, 'stroke-width': s.width, 'stroke-dasharray': s.dash || 'none' });
  }
  add(svg, 'rect', { x: l + 0.5, y: t + 0.5, width: w - 1, height: h, fill: 'none', stroke: '#696969' });

  for (const [f, name] of [[10, '10'], [20, '20'], [50, '50'], [100, '100'], [200, '200'], [500, '500'], [1000, '1k'], [2000, '2k'], [5000, '5k'], [10000, '10k'], [20000, '20k']]) {
    add(svg, 'text', { x: fx(f), y: t + h + 14, 'text-anchor': 'middle' }, name);
  }
  add(svg, 'text', { x: l - 4, y: t + h + 14 }, '5Hz');
  add(svg, 'text', { x: l + 2, y: t - 5 }, c.left);
  add(svg, 'text', { x: l + w - 3, y: t - 5, 'text-anchor': 'end' }, c.right);
  add(svg, 'text', { x: l + w / 2, y: t - 5, 'text-anchor': 'middle', class: 'chart-title' }, c.title);
}

charts.forEach(drawChart);
```
